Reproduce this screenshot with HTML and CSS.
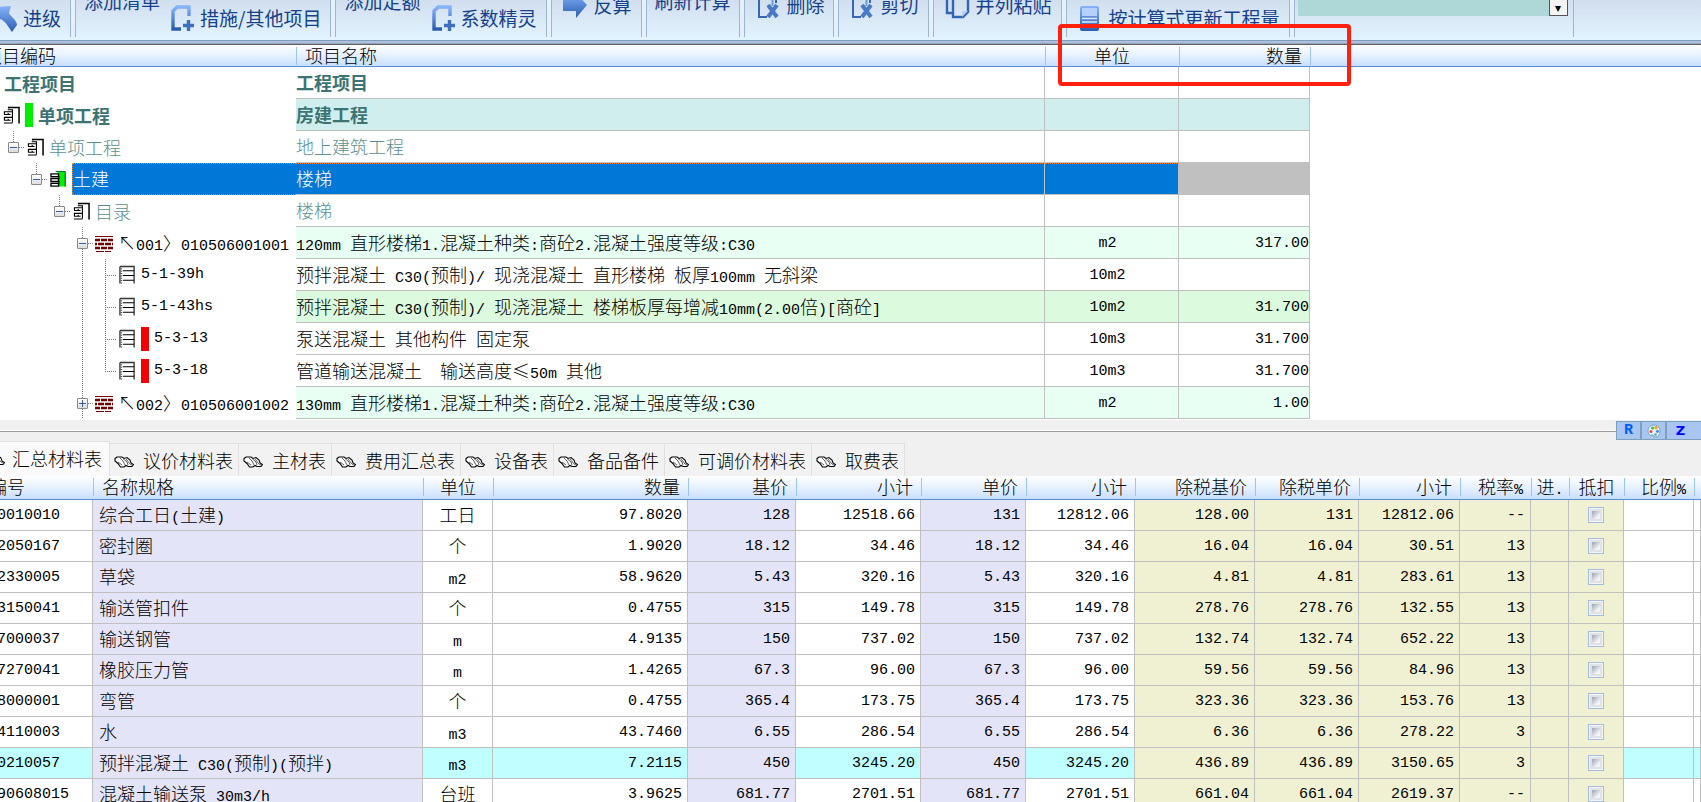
FILE: index.html
```html
<!DOCTYPE html>
<html lang="zh-CN">
<head>
<meta charset="utf-8">
<title>工程项目</title>
<link rel="stylesheet" href="styles.css">
</head>
<body>
<svg class="defs" aria-hidden="true">
  <defs>
    <linearGradient id="blue" x1="0" y1="0" x2="0" y2="1"><stop offset="0" stop-color="#86b4fa"/><stop offset="1" stop-color="#2a5db0"/></linearGradient>
    <symbol id="i-add" viewBox="0 0 28 28"><path d="M23 12V3H11L7 7V25H15" fill="none" stroke="url(#blue)" stroke-width="3.4"/><path d="M17 21.500H28M22.500 16V27" stroke="#3d6fc0" stroke-width="3.400"/></symbol>
    <symbol id="i-up" viewBox="0 0 28 28"><path d="M8 3L22 2L20 9C21 12 28 16 28 21L23 28C21 26 19 20 12 15L7 18Z" fill="url(#blue)"/></symbol>
    <symbol id="i-next" viewBox="0 0 28 28"><path d="M3 6H15V1L27 14L16 27V20H3Z" fill="url(#blue)"/></symbol>
    <symbol id="i-cut" viewBox="0 0 28 28"><path d="M6 2V26H14M23 2V12" fill="none" stroke="#3767b3" stroke-width="2"/><path d="M15 14L24 26M24 14L15 26" stroke="#4a7ac4" stroke-width="4"/><path d="M19.500 2V15" stroke="#6d9be0" stroke-width="2"/></symbol>
    <symbol id="i-paste" viewBox="0 0 28 28"><path d="M11 22H5V2M11 6H26V21L21 26H11Z" fill="none" stroke="#3564b5" stroke-width="2.400"/><path d="M20 26V20H26Z" fill="#b9cff0"/></symbol>
    <symbol id="i-calc" viewBox="0 0 28 28"><rect x="5" y="2" width="19" height="25" rx="2" fill="url(#blue)"/><rect x="7" y="4" width="15" height="8" fill="#b4d0fb"/><path d="M7 14.500H22M7 18H22M8 23H21" stroke="#dcebff" stroke-width="1.500"/></symbol>
    <symbol id="t-book" viewBox="0 0 18 18"><path d="M6 2V1H17V18" fill="none" stroke="#000" stroke-width="1.600"/><path d="M5 3.500H10V17M1 5.500H10M1 8.500H8M1 11.500H10M1 14.500H8M1 17.500H10M1.500 5V8M1.500 11V14M5.500 7V9M5.500 13V15" fill="none" stroke="#000" stroke-width="1.200"/></symbol>
    <symbol id="t-green" viewBox="0 0 18 18"><path d="M6 1H17V17H9V3" fill="#0e0"/><path d="M6 1H16V17" fill="none" stroke="#063" stroke-width="1"/><path d="M1 3.500H9V6.500H1ZM1 8.500H9V11.500H1ZM1 13.500H9V16.500H1Z" fill="#fff" stroke="#000" stroke-width="1.400"/><path d="M9.500 6V9M9.500 11V14" stroke="#000"/></symbol>
    <symbol id="t-brick" viewBox="0 0 18 18"><path d="M0 2.500H18" stroke="#700" stroke-width="1"/><path d="M0 6H5M6 6H12M13 6H18M0 10H2M3 10H9M10 10H16M17 10H18M0 14H5M6 14H12M13 14H18" stroke="#700000" stroke-width="2.600"/><path d="M1 17.500H9M10 17.500H16" stroke="#700000" stroke-width="1"/></symbol>
    <symbol id="t-list" viewBox="0 0 18 20"><path d="M1 1H16V19" fill="none" stroke="#333" stroke-width="1.400"/><path d="M1 1V19" stroke="#333" stroke-width="1.400"/><path d="M4 5.500H16M4 10.500H16M4 15.500H16" stroke="#000" stroke-width="1.200"/><path d="M2.500 3V19" stroke="#000" stroke-dasharray="1 1.500"/></symbol>
    <symbol id="b-hands" viewBox="0 0 20 12"><path d="M1 2.500L3 1H8L10 2.500L13 1.500L16 4L17 7L19.500 8.500L18 10.500H14L12 9.500L10 11H6.500L4 7.500L1 5Z" fill="#fff" stroke="#000" stroke-width="1.100"/><path d="M6 2L9 5L11 9M9 2.500L13 6L14 9M12 3L16 8L18 9M4 6L8 9" fill="none" stroke="#333" stroke-width=".8"/></symbol>
  </defs>
</svg>

<header class="toolbar">
  <div class="group first"><button class="tool low"><svg><use href="#i-up"/></svg>进级</button></div>
  <i class="sep"></i>
  <div class="group"><button class="tool top">添加清单</button><button class="tool low"><svg><use href="#i-add"/></svg>措施/其他项目</button></div>
  <i class="sep"></i>
  <div class="group"><button class="tool top">添加定额</button><button class="tool low"><svg><use href="#i-add"/></svg>系数精灵</button></div>
  <i class="sep"></i>
  <div class="group"><button class="tool mid"><svg><use href="#i-next"/></svg>反算</button></div>
  <i class="sep"></i>
  <div class="group tight"><button class="tool top">刷新计算</button></div>
  <i class="sep"></i>
  <div class="group tight"><button class="tool mid"><svg><use href="#i-cut"/></svg>删除</button></div>
  <i class="sep"></i>
  <div class="group"><button class="tool mid"><svg><use href="#i-cut"/></svg>剪切</button></div>
  <i class="sep"></i>
  <div class="group"><button class="tool mid"><svg><use href="#i-paste"/></svg>并列粘贴</button></div>
  <i class="sep"></i>
  <div class="group"><button class="tool low"><svg><use href="#i-calc"/></svg>按计算式更新工程量</button></div>
  <i class="sep"></i>
  <div class="group combo"><select aria-label="筛选"><option></option></select><button class="drop" aria-label="展开">▾</button></div>
  <i class="sep single"></i>
</header>

<main>
<section class="upper">
<table class="grid tree">
<colgroup><col class="c-code"><col class="c-title"><col class="c-u"><col class="c-q"><col></colgroup>
<thead><tr><th class="cut16">项目编码</th><th class="name">项目名称</th><th class="mid-text">单位</th><th class="right">数量</th><th class="blank"></th></tr></thead>
<tbody>
<tr class="strong"><td><div class="node root">工程项目</div></td><td>工程项目</td><td></td><td></td><td></td></tr>
<tr class="strong aqua"><td><div class="node top-level"><svg class="icon"><use href="#t-book"/></svg><i class="bar green"></i>单项工程</div></td><td>房建工程</td><td></td><td></td><td></td></tr>
<tr class="soft"><td><div class="node"><span class="slot up"><button class="toggle" aria-label="折叠"></button></span><svg class="icon"><use href="#t-book"/></svg>单项工程</div></td><td>地上建筑工程</td><td></td><td></td><td></td></tr>
<tr class="selected"><td><div class="node l2"><span class="slot up"><button class="toggle" aria-label="折叠"></button></span><svg class="icon"><use href="#t-green"/></svg><span class="fill">土建</span></div></td><td>楼梯</td><td></td><td></td><td></td></tr>
<tr class="soft"><td><div class="node l3"><span class="slot up"><button class="toggle" aria-label="折叠"></button></span><svg class="icon"><use href="#t-book"/></svg>目录</div></td><td>楼梯</td><td></td><td></td><td></td></tr>
<tr class="mint"><td><div class="node l4"><span class="slot line"><button class="toggle" aria-label="折叠"></button></span><svg class="icon brick"><use href="#t-brick"/></svg><span>↖<span class="m">001</span>〉<span class="m">010506001001</span></span></div></td><td><span class="m">120mm </span>直形楼梯<span class="m">1.</span>混凝土种类<span class="m">:</span>商砼<span class="m">2.</span>混凝土强度等级<span class="m">:C30</span></td><td>m2</td><td>317.00</td><td></td></tr>
<tr><td><div class="node l4"><span class="slot pass"></span><span class="slot branch"></span><svg class="icon list"><use href="#t-list"/></svg><span class="m">5-1-39h</span></div></td><td>预拌混凝土<span class="m"> C30(</span>预制<span class="m">)/ </span>现浇混凝土<span class="m"> </span>直形楼梯<span class="m"> </span>板厚<span class="m">100mm </span>无斜梁</td><td>10m2</td><td></td><td></td></tr>
<tr class="leaf"><td><div class="node l4"><span class="slot pass"></span><span class="slot branch"></span><svg class="icon list"><use href="#t-list"/></svg><span class="m">5-1-43hs</span></div></td><td>预拌混凝土<span class="m"> C30(</span>预制<span class="m">)/ </span>现浇混凝土<span class="m"> </span>楼梯板厚每增减<span class="m">10mm(2.00</span>倍<span class="m">)[</span>商砼<span class="m">]</span></td><td>10m2</td><td>31.700</td><td></td></tr>
<tr><td><div class="node l4"><span class="slot pass"></span><span class="slot branch"></span><svg class="icon list"><use href="#t-list"/></svg><i class="bar red"></i><span class="m">5-3-13</span></div></td><td>泵送混凝土<span class="m"> </span>其他构件<span class="m"> </span>固定泵</td><td>10m3</td><td>31.700</td><td></td></tr>
<tr><td><div class="node l4"><span class="slot pass"></span><span class="slot branch last"></span><svg class="icon list"><use href="#t-list"/></svg><i class="bar red"></i><span class="m">5-3-18</span></div></td><td>管道输送混凝土<span class="m">&nbsp; </span>输送高度≤<span class="m">50m </span>其他</td><td>10m3</td><td>31.700</td><td></td></tr>
<tr class="mint"><td><div class="node l4"><span class="slot line"><button class="toggle plus" aria-label="展开"></button></span><svg class="icon brick"><use href="#t-brick"/></svg><span>↖<span class="m">002</span>〉<span class="m">010506001002</span></span></div></td><td><span class="m">130mm </span>直形楼梯<span class="m">1.</span>混凝土种类<span class="m">:</span>商砼<span class="m">2.</span>混凝土强度等级<span class="m">:C30</span></td><td>m2</td><td>1.00</td><td></td></tr>
</tbody>
</table>
</section>

<div class="splitter">
  <button class="chip r">R</button>
  <button class="chip" aria-label="配色"><svg viewBox="0 0 14 14"><path d="M7 1C11 1 13 4 13 7C13 11 11 13 8 13C6 13 7 10 5 11C3 12 1 10 1 7C1 3 4 1 7 1Z" fill="#e6f3f6" stroke="#6fa3b8"/><circle cx="4" cy="7.500" r="1.500" fill="#e34b3c"/><circle cx="5.500" cy="4" r="1.500" fill="#4cae4c"/><circle cx="9" cy="3.800" r="1.700" fill="#f0a020"/><circle cx="10.500" cy="7.500" r="1.400" fill="#3c82d0"/><circle cx="8.500" cy="10.500" r="1.300" fill="#4fa8a0"/></svg></button>
  <button class="chip z">Z</button>
</div>

<nav class="tabs" role="tablist">
  <button role="tab" aria-selected="true" class="tab active"><svg><use href="#b-hands"/></svg>汇总材料表</button>
  <button role="tab" class="tab"><svg><use href="#b-hands"/></svg>议价材料表</button>
  <button role="tab" class="tab"><svg><use href="#b-hands"/></svg>主材表</button>
  <button role="tab" class="tab"><svg><use href="#b-hands"/></svg>费用汇总表</button>
  <button role="tab" class="tab"><svg><use href="#b-hands"/></svg>设备表</button>
  <button role="tab" class="tab"><svg><use href="#b-hands"/></svg>备品备件</button>
  <button role="tab" class="tab"><svg><use href="#b-hands"/></svg>可调价材料表</button>
  <button role="tab" class="tab"><svg><use href="#b-hands"/></svg>取费表</button>
</nav>

<section class="lower">
<table class="grid materials">
<colgroup><col class="m1"><col class="m2"><col class="m3"><col class="m4"><col class="m5"><col class="m6"><col class="m7"><col class="m8"><col class="m9"><col class="m10"><col class="m11"><col class="m12"><col class="m13"><col class="m14"><col class="m15"><col></colgroup>
<thead><tr><th class="cut11">编号</th><th class="name">名称规格</th><th class="mid-text">单位</th><th class="right">数量</th><th class="right">基价</th><th class="right">小计</th><th class="right">单价</th><th class="right">小计</th><th class="right">除税基价</th><th class="right">除税单价</th><th class="right">小计</th><th class="right">税率<span class="m">%</span></th><th class="mid-text">进<span class="m">.</span></th><th class="mid-text">抵扣</th><th class="right">比例<span class="m">%</span></th><th class="blank"></th></tr></thead>
<tbody>
<tr><td>0010010</td><td>综合工日<span class="m">(</span>土建<span class="m">)</span></td><td>工日</td><td>97.8020</td><td>128</td><td>12518.66</td><td>131</td><td>12812.06</td><td>128.00</td><td>131</td><td>12812.06</td><td>--</td><td></td><td><input type="checkbox" aria-label="抵扣"></td><td></td><td></td></tr>
<tr><td>2050167</td><td>密封圈</td><td>个</td><td>1.9020</td><td>18.12</td><td>34.46</td><td>18.12</td><td>34.46</td><td>16.04</td><td>16.04</td><td>30.51</td><td>13</td><td></td><td><input type="checkbox" aria-label="抵扣"></td><td></td><td></td></tr>
<tr><td>2330005</td><td>草袋</td><td><span class="m">m2</span></td><td>58.9620</td><td>5.43</td><td>320.16</td><td>5.43</td><td>320.16</td><td>4.81</td><td>4.81</td><td>283.61</td><td>13</td><td></td><td><input type="checkbox" aria-label="抵扣"></td><td></td><td></td></tr>
<tr><td>3150041</td><td>输送管扣件</td><td>个</td><td>0.4755</td><td>315</td><td>149.78</td><td>315</td><td>149.78</td><td>278.76</td><td>278.76</td><td>132.55</td><td>13</td><td></td><td><input type="checkbox" aria-label="抵扣"></td><td></td><td></td></tr>
<tr><td>7000037</td><td>输送钢管</td><td><span class="m">m</span></td><td>4.9135</td><td>150</td><td>737.02</td><td>150</td><td>737.02</td><td>132.74</td><td>132.74</td><td>652.22</td><td>13</td><td></td><td><input type="checkbox" aria-label="抵扣"></td><td></td><td></td></tr>
<tr><td>7270041</td><td>橡胶压力管</td><td><span class="m">m</span></td><td>1.4265</td><td>67.3</td><td>96.00</td><td>67.3</td><td>96.00</td><td>59.56</td><td>59.56</td><td>84.96</td><td>13</td><td></td><td><input type="checkbox" aria-label="抵扣"></td><td></td><td></td></tr>
<tr><td>8000001</td><td>弯管</td><td>个</td><td>0.4755</td><td>365.4</td><td>173.75</td><td>365.4</td><td>173.75</td><td>323.36</td><td>323.36</td><td>153.76</td><td>13</td><td></td><td><input type="checkbox" aria-label="抵扣"></td><td></td><td></td></tr>
<tr><td>4110003</td><td>水</td><td><span class="m">m3</span></td><td>43.7460</td><td>6.55</td><td>286.54</td><td>6.55</td><td>286.54</td><td>6.36</td><td>6.36</td><td>278.22</td><td>3</td><td></td><td><input type="checkbox" aria-label="抵扣"></td><td></td><td></td></tr>
<tr class="current"><td>0210057</td><td>预拌混凝土<span class="m"> C30(</span>预制<span class="m">)(</span>预拌<span class="m">)</span></td><td><span class="m">m3</span></td><td>7.2115</td><td>450</td><td>3245.20</td><td>450</td><td>3245.20</td><td>436.89</td><td>436.89</td><td>3150.65</td><td>3</td><td></td><td><input type="checkbox" aria-label="抵扣"></td><td></td><td></td></tr>
<tr><td>90608015</td><td>混凝土输送泵<span class="m"> 30m3/h</span></td><td>台班</td><td>3.9625</td><td>681.77</td><td>2701.51</td><td>681.77</td><td>2701.51</td><td>661.04</td><td>661.04</td><td>2619.37</td><td>--</td><td></td><td><input type="checkbox" aria-label="抵扣"></td><td></td><td></td></tr>
</tbody>
</table>
</section>
</main>
<div class="highlight"></div>
</body>
</html>
```

FILE: styles.css
```css
* { box-sizing: border-box; }
body {
  margin: 0;
  height: 100vh;
  overflow: hidden;
  position: relative;
  background: #fff;
  color: #000;
  font: 300 18px/20px "Noto Sans CJK SC", sans-serif;
}
button { font: inherit; color: inherit; border: 0; padding: 0; background: none; white-space: nowrap; }
svg { flex: none; }
.defs { position: absolute; width: 0; height: 0; }
.m { font: 15px/10px "Liberation Mono", monospace; white-space: pre; }

/* toolbar */
.toolbar {
  display: flex;
  height: 45px;
  overflow: hidden;
  background: linear-gradient(#d0deee, #dcebf8 60%, #e1f4ff) 0 0 / 100% 40px no-repeat,
    linear-gradient(#7b9fbd 0 1px, #b0c0dc 1px 3px, #8ea6bd 3px 4px, #606060 4px) 0 40px / 100% 5px no-repeat;
}
.group { display: flex; align-items: flex-start; gap: 6px; height: 37px; padding: 0 9px 0 8px; flex: none; }
.group.first { padding-left: 0; margin-left: -11px; }
.group.tight { padding-right: 8px; }
.tool { display: flex; align-items: center; gap: 6px; height: 28px; color: #15428b; font-size: 19px; line-height: 24px; font-weight: 400; }
.tool svg { width: 28px; height: 28px; }
.tool.low { margin-top: 4px; }
.tool.mid { margin-top: -9px; }
.tool.top { margin-top: -13px; }
.sep { flex: none; width: 6px; height: 37px; border: solid #9bb8d3; border-width: 0 1px; background: #e6f0fa; }
.sep.single { width: 1px; border-right: 0; }
.combo { gap: 0; padding: 0 5px 0 3px; }
.combo select { appearance: none; width: 251px; height: 16px; border: 0; border-radius: 0; background: #aed8d8; }
.drop { width: 19px; height: 16px; border: 1px solid #555; border-top: 0; background: #f4f4f4; font: 12px/10px "DejaVu Sans", sans-serif; }

/* shared grid look */
.grid { width: 100%; table-layout: fixed; border-collapse: separate; border-spacing: 0; }
th {
  height: 24px;
  padding: 0 0 3px;
  font-weight: 300;
  text-align: left;
  white-space: nowrap;
  border-bottom: 1px solid #5b8fd0;
  background: linear-gradient(#9ac4f5, #9ac4f5) 0 2px / 1px 18px no-repeat, linear-gradient(#fff, #e6f1ff 50%, #c8deff);
}
th:first-child { background: linear-gradient(#fff, #e6f1ff 50%, #c8deff); }
.tree th { height: 22px; padding-bottom: 1px; }
th.name { padding-left: 9px; }
th.mid-text { text-align: center; }
th.right { text-align: right; padding-right: 8px; }
th.cut16 { text-indent: -16px; }
th.cut11 { text-indent: -11px; }
td { padding: 0 0 2px; white-space: nowrap; overflow: hidden; border: solid #c0c0c0; border-width: 0 1px 1px 0; }

/* project tree */
.upper { overflow: hidden; padding-bottom: 1px; }
.c-code { width: 296px; } .c-title { width: 749px; } .c-u { width: 134px; } .c-q { width: 131px; }
.tree td { height: 32px; }
.tree td:first-child, .tree td:last-child { border: 0; padding: 0; }
.tree td:nth-child(3) { text-align: center; padding: 2px 8px 0 0; font: 15px/20px "Liberation Mono", monospace; }
.tree td:nth-child(4) { text-align: right; padding: 2px 0 0; font: 15px/20px "Liberation Mono", monospace; }
.strong { color: #3c7474; font-weight: 700; }
.soft { color: #5c9090; }
.aqua td:nth-child(n+2):nth-child(-n+4) { background: #d0eeee; }
.mint td:nth-child(n+2):nth-child(-n+4) { background: #e8fff4; }
.leaf td:nth-child(n+2):nth-child(-n+4) { background: #dcfade; }
.selected { color: #fff; }
.selected td:nth-child(2), .selected td:nth-child(3) { background: #0078d7; border-top: 1px dotted #f08020; }
.selected td:nth-child(4) { background: #c0c0c0; }
.node { display: flex; align-items: center; height: 32px; padding-left: 2px; line-height: 16px; }
.node.root { padding-left: 4px; }
.node.top-level { padding-left: 1px; }
.node.l2 { padding-left: 25px; }
.node.l3 { padding-left: 48px; }
.node.l4 { padding-left: 71px; }
.icon { width: 17px; height: 18px; margin: 0 5px 0 2px; }
.icon.brick { width: 18px; margin: 0 5px 0 1px; }
.icon.list { height: 20px; margin-right: 5px; }
.bar { flex: none; width: 8px; height: 24px; margin-right: 5px; }
.green { background: #0e0; }
.red { background: #f00000; }
.fill { flex: 1; height: 32px; line-height: 28px; background: #0078d7; border: 1px dotted #f08020; border-right: 0; }
.slot {
  --v: repeating-linear-gradient(#777 0 1px, transparent 1px 2px);
  --h: repeating-linear-gradient(90deg, #777 0 1px, transparent 1px 2px);
  flex: none; display: grid; place-items: center; width: 23px; height: 32px;
}
.slot.up { background: var(--v) 11px 0 / 1px 16px no-repeat, var(--h) 100% 16px / 12px 1px no-repeat; }
.slot.line { background: var(--v) 11px 0 / 1px 32px no-repeat, var(--h) 100% 16px / 12px 1px no-repeat; }
.slot.pass { background: var(--v) 11px 0 / 1px 32px no-repeat; }
.slot.branch { background: var(--v) 11px 0 / 1px 32px no-repeat, var(--h) 100% 16px / 12px 1px no-repeat; }
.slot.last { background: var(--v) 11px 0 / 1px 16px no-repeat, var(--h) 100% 16px / 12px 1px no-repeat; }
.toggle {
  width: 11px; height: 11px; border: 1px solid #8a8a8a; border-radius: 1px;
  background: linear-gradient(#3c5aa8, #3c5aa8) 50% 50% / 7px 1px no-repeat, linear-gradient(#fff, #dcdcdc);
}
.toggle.plus {
  background: linear-gradient(#3c5aa8, #3c5aa8) 50% 50% / 7px 1px no-repeat,
    linear-gradient(#3c5aa8, #3c5aa8) 50% 50% / 1px 7px no-repeat, linear-gradient(#fff, #dcdcdc);
}

/* splitter and tabs */
.splitter {
  display: flex; justify-content: flex-end; height: 21px; padding-top: 1px;
  background: linear-gradient(#fff 0 1px, #999 1px) 0 10px / 100% 2px no-repeat, #f0f0f0;
}
.chip { display: grid; place-items: center; width: 25px; height: 19px; border: 1px solid #7f9fbf; background: #a9c5f2; font: 700 15px/16px "Liberation Mono", monospace; color: #0060ff; }
.chip svg { width: 14px; height: 14px; }
.chip.z { width: 35px; padding-right: 7px; color: #00f; font: 700 13px/16px "DejaVu Sans", sans-serif; border-right: 0; }
.tabs { display: flex; align-items: flex-end; height: 35px; background: #f0f0f0; }
.tab { display: flex; align-items: center; gap: 9px; flex: none; height: 33px; padding: 0 5px 0 4px; border: solid #e0e0e0; border-width: 1px 1px 0 0; background: #f2f2f2; }
.tab.active { height: 35px; margin-left: -19px; padding: 0 7px 2px 4px; background: #fafafa; gap: 7px; }
.tab svg { width: 20px; height: 12px; margin-top: 4px; }

/* materials */
.m1 { width: 93px; } .m2 { width: 330px; } .m3 { width: 70px; } .m4 { width: 195px; } .m5 { width: 108px; }
.m6 { width: 125px; } .m7 { width: 105px; } .m8 { width: 109px; } .m9 { width: 120px; } .m10 { width: 104px; }
.m11 { width: 101px; } .m12 { width: 71px; } .m13 { width: 38px; } .m14 { width: 55px; } .m15 { width: 70px; }
.materials td { height: 31px; text-align: right; padding: 2px 5px 0 0; font: 15px/20px "Liberation Mono", monospace; }
.materials td:nth-child(1) { text-align: left; text-indent: -3px; padding-right: 0; }
.materials td:nth-child(2), .materials td:nth-child(3) { font: 300 18px/20px "Noto Sans CJK SC", sans-serif; }
.materials td:nth-child(2) { text-align: left; padding: 0 0 2px 6px; }
.materials td:nth-child(3) { text-align: center; padding: 0 0 2px; }
.current td { background: #c0ffff; }
.materials td:nth-child(2), .materials td:nth-child(5), .materials td:nth-child(7) { background: #e4e4f8; }
.materials td:nth-child(n+9):nth-child(-n+14) { background: #f0f0d2; }
.materials td:nth-child(14) { text-align: center; padding: 0; }
.materials td .m { font: 15px/10px "Liberation Mono", monospace; }
input[type="checkbox"] {
  appearance: none; display: block; width: 16px; height: 16px; margin: 0 auto;
  border: 1px solid #a4bce0; outline: 1px solid #f4f4f4; outline-offset: -2px;
  background: linear-gradient(135deg, #9aa4b4, #f4f4f4 75%) content-box, #dfe3e8; padding: 3px;
}

/* callout frame */
.highlight { position: absolute; left: 1058px; top: 24px; width: 293px; height: 62px; border: 4px solid #ff2010; border-radius: 4px; }
```
